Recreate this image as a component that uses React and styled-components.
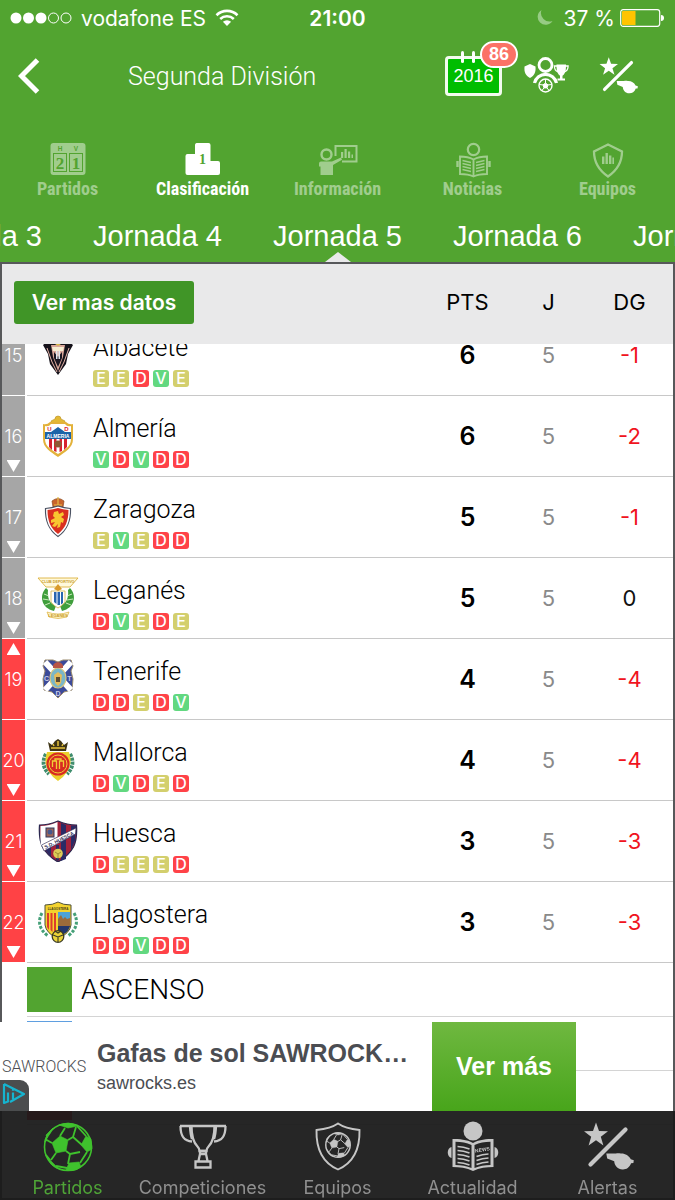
import { useLayoutEffect, useRef } from "react";
import styled, { createGlobalStyle } from "styled-components";

const teams = [
  { rank: 15, name: "Albacete", form: "EEDVE", pts: 6, played: 5, diff: -1, crest: "albacete" },
  { rank: 16, name: "Almería", form: "VDVDD", pts: 6, played: 5, diff: -2, move: "down", crest: "almeria" },
  { rank: 17, name: "Zaragoza", form: "EVEDD", pts: 5, played: 5, diff: -1, move: "down", crest: "zaragoza" },
  { rank: 18, name: "Leganés", form: "DVEDE", pts: 5, played: 5, diff: 0, move: "down", crest: "leganes" },
  { rank: 19, name: "Tenerife", form: "DDEDV", pts: 4, played: 5, diff: -4, move: "up", crest: "tenerife" },
  { rank: 20, name: "Mallorca", form: "DVDED", pts: 4, played: 5, diff: -4, move: "down", crest: "mallorca" },
  { rank: 21, name: "Huesca", form: "DEEED", pts: 3, played: 5, diff: -3, move: "down", crest: "huesca" },
  { rank: 22, name: "Llagostera", form: "DDVDD", pts: 3, played: 5, diff: -3, move: "down", crest: "llagostera" },
];

const FIRST_RELEGATED = 19;
const INITIAL_SCROLL = 29;

const formColors = { E: "#d3cf6d", D: "#ff4248", V: "#62d880" };

/* ---------- icons ---------- */

const SignalIcon = () => (
  <svg width="62" height="14" viewBox="0 0 62 14" fill="#fff">
    <circle cx="6" cy="7" r="5.5" />
    <circle cx="18.5" cy="7" r="5.5" />
    <circle cx="31" cy="7" r="5.5" />
    <circle cx="43.5" cy="7" r="5" fill="none" stroke="#fff" />
    <circle cx="56" cy="7" r="5" fill="none" stroke="#fff" />
  </svg>
);

const WifiIcon = () => (
  <svg width="24" height="18" viewBox="0 0 24 18" fill="none" stroke="#fff" strokeWidth="2.6">
    <path d="M1.5 6.2a15 15 0 0 1 21 0" />
    <path d="M5.2 10a9.8 9.8 0 0 1 13.6 0" />
    <path d="M12 17 7.9 12.8a6 6 0 0 1 8.2 0z" fill="#fff" stroke="none" />
  </svg>
);

const NightIcon = () => (
  <svg width="17" height="18" viewBox="0 0 17 18">
    <path d="M5.5 1A8 8 0 1 0 16.5 12 8.6 8.6 0 0 1 5.5 1z" fill="#97cb84" />
  </svg>
);

const BatteryIcon = () => (
  <svg width="45" height="18" viewBox="0 0 45 18">
    <rect x="0.7" y="0.7" width="39" height="16.6" rx="2.5" fill="none" stroke="#fff" strokeWidth="1.2" />
    <path d="M3 2h12.500v14H3a1 1 0 0 1-1-1V3a1 1 0 0 1 1-1z" fill="#ffc400" />
    <path d="M41 6a3 3 0 0 1 0 6z" fill="#fff" />
  </svg>
);

const BackIcon = () => (
  <svg width="22" height="36" viewBox="0 0 22 36" fill="none" stroke="#fff" strokeWidth="5">
    <path d="M19.500 2 3.500 18l16 16" />
  </svg>
);

const ballLines =
  "M17 14 22 6M25 18 30 15 39 23M30 15 33 5M23 29 27 32 37 30M27 32 25 42M34 4 43 14M44 30 37 41M9 21 2 17M13 31 8 38M24 46 13 44M5 12 2 20M7 38 3 33";
const ballPatches =
  "M17 14 25 18 23 29 13 31 9 21zM38 23 43 14 48 17 49 27 44 30zM16 3 25 6 35 4Q26-1 16 3zM26 41 36 40 38 45Q31 50 23 48zM7 38 14 45Q18 48 13 46 8 43 5 38zM3 13 10 6Q8 11 4 16z";

const Ball = ({ color, rim }) => (
  <g fill={color} stroke={color} strokeLinejoin="round">
    <circle cx="25" cy="25" r="23.500" fill="none" strokeWidth={rim} />
    <path d={ballLines} fill="none" strokeWidth="1.8" />
    <path d={ballPatches} strokeWidth="0.6" />
  </g>
);

const PlayerIcon = () => (
  <svg width="48" height="40" viewBox="0 0 48 40" fill="#fff">
    <path d="M0.500 10.500 6 8l5.500 2.500c.4 6-1 9-5.500 11.500C1.500 19.500 0 16.500.5 10.500z" />
    <circle cx="21.500" cy="9" r="6.500" fill="none" stroke="#fff" strokeWidth="2.8" />
    <path d="M10.500 27a11.300 11.300 0 0 1 22 0" fill="none" stroke="#fff" strokeWidth="3.200" />
    <circle cx="21.500" cy="29.500" r="6.500" fill="none" stroke="#fff" strokeWidth="1.400" />
    <path d="M21.500 27l2.500 1.900-1 3h-3l-1-3zM21.500 23v4M28 28.500l-4 .4M25.500 35l-2.500-3.100M17.500 35l2.500-3.100M15 28.500l4 .4" stroke="#fff" strokeWidth="1" />
    <path d="M32.500 8.500h9.500v2c0 5-1.500 8-3.500 9.200v2.800h2.500v2h-7.500v-2h2.500v-2.800c-2-1.200-3.500-4.200-3.500-9.200z" />
    <path d="M33 10h-2.600c0 3 1 5 3.600 5.800M41.500 10h2.600c0 3-1 5-3.600 5.800" fill="none" stroke="#fff" strokeWidth="1.300" />
  </svg>
);

const StarWhistleIcon = ({ size = 52, color = "#fff" }) => (
  <svg width={size} height={size} viewBox="0 0 52 52" fill={color}>
    <path d="M14 1.500l3 8.600 9 .2-7.200 5.500 2.600 8.700L14 19.300l-7.400 5.200 2.600-8.700L2 10.300l9-.2z" />
    <path d="M43.500 8.500 8.500 43.500" stroke={color} strokeWidth="4.200" strokeLinecap="round" />
    <path d="M24.300 32.500h9.500c2-.3 3-.2 5 0 4-.3 8.200 2 10 5.800l3 .9-.4 2.900-2.300.2c-1.700 4.500-5 6.400-8.600 6.200-4.700-.2-7.900-3.600-8.300-8.200l-7-2.800z" />
  </svg>
);

const MatchesIcon = () => (
  <svg width="36" height="34" viewBox="0 0 36 34">
    <rect x="0.500" y="1" width="35" height="32" rx="3" fill="#fff" />
    <g fill="#52a430" fontFamily="Liberation Sans, sans-serif" fontSize="6.500" fontWeight="700" textAnchor="middle">
      <text x="10" y="9">H</text>
      <text x="26" y="9">V</text>
    </g>
    <g fill="none" stroke="#52a430">
      <rect x="3.500" y="11.500" width="13" height="18" />
      <rect x="19.500" y="11.500" width="13" height="18" />
    </g>
    <g fill="#52a430" fontFamily="Liberation Serif, serif" fontSize="17" fontWeight="700" textAnchor="middle">
      <text x="10" y="26.500">2</text>
      <text x="26" y="26.500">1</text>
    </g>
  </svg>
);

const PodiumIcon = () => (
  <svg width="36" height="34" viewBox="0 0 36 34">
    <path d="M11.500 1h12a2 2 0 0 1 2 2v16H33a2 2 0 0 1 2 2v10a2 2 0 0 1-2 2H2.500a2 2 0 0 1-2-2V14a2 2 0 0 1 2-2H10V3a2 2 0 0 1 1.500-2z" fill="#fff" />
    <text x="17.500" y="22" fill="#52a430" fontFamily="Liberation Serif, serif" fontSize="14" fontWeight="700" textAnchor="middle">
      1
    </text>
  </svg>
);

const InfoIcon = () => (
  <svg width="40" height="34" viewBox="0 0 40 34" fill="#fff">
    <circle cx="8.500" cy="12.500" r="5" fill="none" stroke="#fff" strokeWidth="2.400" />
    <path d="M3 19.500h11l9-4 1 2.300-9 5.200V33H2.500v-8.500H1V21.500a2 2 0 0 1 2-2z" />
    <path d="M17.500 14V4h21v15.500H24" fill="none" stroke="#fff" strokeWidth="2" />
    <path d="M23 10h2.200v6H23zM26.500 7h2.200v9h-2.200zM30 9.500h2.200V16H30zM33.500 12.500h1.500V16h-1.500z" />
  </svg>
);

const ReaderOutlineIcon = () => (
  <svg width="36" height="36" viewBox="0 0 36 36" fill="none" stroke="#fff">
    <circle cx="18.500" cy="7.500" r="5.700" strokeWidth="2.200" />
    <path d="M5 14.500c5 0 9 .6 13.500 3 4.500-2.400 8.500-3 13.500-3V32c-5 0-9 .4-13.500 2.500C14 32.400 10 32 5 32zM18.500 17.500v17" strokeWidth="1.900" />
    <path d="M7.500 18.500l8.500 2M7.500 21.500l8.500 2M7.500 24.500l8.500 2M7.500 27.500l8.500 2M29.500 18.500l-8.500 2M29.500 21.500l-8.500 2M29.500 24.500l-8.500 2M29.500 27.500l-8.500 2" strokeWidth="1.400" />
    <path d="M2.500 19v6M34.500 19v6" strokeWidth="2.400" />
  </svg>
);

const ShieldChartIcon = () => (
  <svg width="36" height="36" viewBox="0 0 36 36" fill="#fff">
    <path d="M18 2.500 32 9.500C32 21 26 29 18 34.500 10 29 4 21 4 9.500z" fill="none" stroke="#fff" strokeWidth="2.300" />
    <path d="M12 14.500h2.400V22H12zM15.500 11h2.400v11h-2.400zM19 13.500h2.400V22H19zM22.400 15.500H24V22h-1.600z" />
  </svg>
);

const BallIcon = ({ color }) => (
  <svg width="52" height="52" viewBox="-1 -1 52 52">
    <Ball color={color} rim={1.6} />
  </svg>
);

const TrophyIcon = ({ color }) => (
  <svg width="52" height="52" viewBox="0 0 52 52" fill="none" stroke={color} strokeWidth="2.300">
    <path d="M3 5h46M14.500 5c0 12 2.500 17 6 20.500 1.500 1.500 2 2.800 2 4.500h7c0-1.700.5-3 2-4.500 3.500-3.500 6-8.500 6-20.500" />
    <path d="M3.500 5c0 9 2.500 15 11.500 15.500M48.500 5c0 9-2.500 15-11.500 15.500M13 5c.2 5 .6 9 2 13M39 5c-.2 5-.6 9-2 13" />
    <path d="M23 30h6v3h-6zM23 33l-1.500 7M29 33l1.500 7M18.500 40.500h15v6h-15z" />
  </svg>
);

const ShieldBallIcon = ({ color }) => (
  <svg width="52" height="52" viewBox="0 0 52 52">
    <path d="M26 2.500c5 3.500 12.500 5.500 21.500 6.500C48 28 42 41.500 26 48.500 10 41.500 4 28 4.500 9 13.500 8 21 6 26 2.500z" fill="none" stroke={color} strokeWidth="1.900" />
    <g transform="translate(13 11) scale(0.520)">
      <Ball color={color} rim={2.8} />
    </g>
  </svg>
);

const ReaderIcon = ({ color }) => (
  <svg width="52" height="52" viewBox="0 0 52 52" fill={color}>
    <circle cx="26" cy="10" r="9.500" />
    <path d="M5.500 18c7 0 14 .4 20.500 4 6.500-3.600 13.500-4 20.500-4v28c-7 0-14 .8-20.500 4-6.500-3.200-13.500-4-20.500-4z" />
    <path d="M4.500 26c-5 1-5 10 0 11zM47.500 26c5 1 5 10 0 11z" />
    <path d="M8.500 20.800c6 0 11 .8 16 3.200v23c-5-2-10-2.800-16-3zM43.500 20.800c-6 0-11 .8-16 3.200v23c5-2 10-2.800 16-3z" fill="#262626" />
    <path d="M10.500 25.500q6 .2 12 2.500M10.500 29.500q6 .2 12 2.500M10.500 33.500q6 .2 12 2.500M10.500 37.500q6 .2 12 2.500M10.500 41.500q6 .2 12 2.500M41.500 33q-6 .2-12 2.500M41.500 37q-6 .2-12 2.500M41.500 41q-6 .2-12 2.500" fill="none" stroke={color} strokeWidth="1.700" />
    <text x="35.500" y="30.500" fontFamily="Liberation Sans, sans-serif" fontSize="5" fontWeight="700" textAnchor="middle" transform="rotate(-10 35 29)">
      NEWS
    </text>
  </svg>
);

const AdChoicesIcon = () => (
  <svg width="24" height="24" viewBox="0 0 24 24" fill="none" stroke="#16b4cf" strokeWidth="2.200">
    <path d="M2 2 22 12 8 20M2 2v19l4-1.500v-9" strokeLinejoin="round" />
    <path d="M11 10.500v7M11 6.500v2.200" />
  </svg>
);

/* ---------- team crests ---------- */

const crests = {
  albacete: (
    <>
      <path d="M21 1 31 7l5 4-5 9-2 10-8 11-8-11-2-10-5-9 5-4z" fill="#15121a" />
      <path d="M14 11h14l-2 12-5 14-5-14z" fill="#d9a79a" />
      <path d="M15 13h12l-1 4H16z" fill="#f6edd2" />
      <path d="M17 18l4 5 4-5v6l-4 9-4-9z" fill="#1b1722" />
      <path d="M19 17h1.500v8H19zM21.500 17H23v8h-1.500z" fill="#dfe6ee" />
      <path d="M18 10l3-4 3 4-3 2z" fill="#d8b64a" />
      <path d="M10 14l5 14 5 10M32 14l-5 14-5 10" stroke="#e8b6ab" strokeWidth="1" fill="none" />
    </>
  ),
  almeria: (
    <>
      <path d="M18 4a3 3 0 0 1 6 0l4 2-1 4H15l-1-4z" fill="#e3b934" stroke="#b98f22" strokeWidth="0.6" />
      <path d="M6 9q4 1 7-2h16q3 3 7 2v15c0 9-8 13-15 18C14 37 6 33 6 24z" fill="#e3b23a" />
      <path d="M8 11q4 1 6-2h14q2 3 6 2v13c0 8-7 11-13 15C15 35 8 32 8 24z" fill="#fff" />
      <path d="M12 24h3v11l-3-3zM17 24h2.500v13L17 36zM22.500 24H25v12l-2.500 1zM27 24h3v8l-3 3z" fill="#d8232f" />
      <path d="M8 17h26v7H8zM14 17l7-5 7 5z" fill="#1c63a8" />
      <circle cx="21" cy="29" r="3.600" fill="#8d5b34" />
      <g fontFamily="Liberation Sans, sans-serif" fontWeight="700" textAnchor="middle">
        <text x="12.500" y="16" fontSize="6" fill="#d8232f">U</text>
        <text x="29.500" y="16" fontSize="6" fill="#d8232f">D</text>
        <text x="21" y="22.500" fontSize="5" fill="#fff">ALMERIA</text>
      </g>
    </>
  ),
  zaragoza: (
    <>
      <path d="M15 5q6-5 12 0l-1 6H16z" fill="#c9642c" stroke="#8e4a1f" strokeWidth="0.700" />
      <path d="M17 9h8M21 1v8" stroke="#e7bd4b" strokeWidth="1.200" />
      <path d="M8.500 12.500Q15 12 21 10q6 2 12.500 2.500C34 26 30 34 21 40.500 12 34 8 26 8.500 12.500z" fill="#fff" stroke="#4b5262" strokeWidth="1.200" />
      <path d="M10.500 14Q16 13.500 21 12q5 1.500 10.500 2C31.500 25 28.500 32 21 38 13.500 32 10.500 25 10.500 14z" fill="#d92f20" />
      <path d="M17 16l4-1 1 3 4-2 1 3-3 2 3 2-1 4-2-1-1 5-3 1 1-4-3 3-3-1 3-4-4 1v-3l4-2-2-2z" fill="#f8c630" />
    </>
  ),
  leganes: (
    <>
      <path d="M1 1h40l-8 9H9z" fill="#fff9dc" stroke="#dcb23e" strokeWidth="0.900" />
      <text x="21" y="5.500" fontFamily="Liberation Sans, sans-serif" fontSize="3.700" fontWeight="700" textAnchor="middle" fill="#c79a29">CLUB DEPORTIVO</text>
      <path d="M9 11C2 18 4 31 17 34l2-5c-6-2-9-8-8-16zM33 11c7 7 5 20-8 23l-2-5c6-2 9-8 8-16z" fill="#3f9e3c" />
      <path d="M7 17l5 2M6 22l6 1M8 28l5-2M35 17l-5 2M36 22l-6 1M34 28l-5-2" stroke="#d8f0c8" strokeWidth="0.900" />
      <path d="M14 14h14v11q-3 4-7 6-4-2-7-6z" fill="#fff" stroke="#d6b142" strokeWidth="0.800" />
      <path d="M17 15h2.500v12L17 25zM20.500 15H23v13h-2.500zM24 15h2v11l-2 1.500z" fill="#2b66b0" />
      <path d="M17 12l4-5 4 5-4 2z" fill="#d99a2b" />
      <path d="M10 35q11 4 22 0l-2 5q-9 3-18 0z" fill="#fff4c6" stroke="#dcb23e" strokeWidth="0.700" />
      <text x="21" y="40" fontFamily="Liberation Sans, sans-serif" fontSize="4" fontWeight="700" textAnchor="middle" fill="#c79a29">LEGANES</text>
    </>
  ),
  tenerife: (
    <>
      <path d="M8 2h8l5 2 5-2h8l2 6-2 5 2 8-1 11-8 2-6 6-6-6-8-2-1-11 2-8-2-5z" fill="#3b4a99" stroke="#9a8b6d" strokeWidth="1" />
      <path d="M8 4l26 28M34 4 8 32" stroke="#fff" strokeWidth="6" />
      <ellipse cx="21" cy="20" rx="8" ry="10" fill="#79b6c9" stroke="#ddc77c" strokeWidth="1.200" />
      <path d="M17 17l4-3 4 3-1 8-3 3-3-3z" fill="#e4bc5d" />
      <path d="M19 19h4v5h-4z" fill="#5b4b33" />
      <path d="M16 10q-1-5 5-6 6 1 5 6z" fill="#b85545" />
      <g fontFamily="Liberation Sans, sans-serif" fontSize="7" fontWeight="700" textAnchor="middle" fill="#c8cce8">
        <text x="9.500" y="23">C</text>
        <text x="32.500" y="23">T</text>
        <text x="21" y="38">D</text>
      </g>
    </>
  ),
  mallorca: (
    <>
      <path d="M11 3l4 3 3-4 3-2 3 2 3 4 4-3-2 9H13z" fill="#3d3415" />
      <path d="M14 9h14M16 5l1 2M26 5l-1 2M21 2v5" stroke="#e6c13b" strokeWidth="1.500" />
      <path d="M9 15q-6 11 3 20M33 15q6 11-3 20" stroke="#3f8d6d" strokeWidth="4" strokeDasharray="3 1" fill="none" />
      <path d="M10 13h22q4 12-2 20-4 6-9 9-5-3-9-9-6-8-2-20z" fill="#ecd02c" />
      <circle cx="21" cy="25" r="11.500" fill="#d82b22" />
      <circle cx="21" cy="25" r="9" fill="none" stroke="#f0cf36" strokeWidth="1" />
      <path d="M15.500 28v-6h4v8M26.500 28v-6h-4v8M18 22v-2h6v2" stroke="#f0cf36" strokeWidth="1.300" fill="none" />
    </>
  ),
  huesca: (
    <>
      <path d="M2.500 5Q12 5 21 1q9 4 18.500 4 1 14-3 22-5 9-15.500 15Q10.500 36 5.500 27q-4-8-3-22z" fill="#a3223b" stroke="#28264f" strokeWidth="1.200" />
      <path d="M24 3l5 2v34l-5 2zM34 5.500h5l-1 15-4 10zM9 26h5v11l-5-6zM19 25h3v15l-1 1-2-1z" fill="#2a2b66" />
      <path d="M3.500 6Q12 6 20.500 2v15L4 26Q3 17 3.500 6z" fill="#fff" />
      <rect x="9" y="8" width="8" height="9" fill="#9c6658" stroke="#30395f" />
      <circle cx="13" cy="12" r="2.500" fill="#46588e" />
      <path d="M4.500 25 39 8l-.5 6L7 31z" fill="#fff" stroke="#28264f" strokeWidth="0.600" />
      <text x="22" y="22" fontFamily="Liberation Sans, sans-serif" fontSize="5" fontWeight="700" textAnchor="middle" fill="#28264f" transform="rotate(-27 22 20)">S.D. HUESCA</text>
      <circle cx="21" cy="33.500" r="4.800" fill="#dccb57" />
      <path d="M18 32l3 2 3-2M21 34v4" stroke="#8a7a2b" strokeWidth="0.800" fill="none" />
    </>
  ),
  llagostera: (
    <>
      <path d="M5 12q-7 13 6 23M37 12q7 13-6 23" stroke="#45a078" strokeWidth="3" strokeDasharray="3 1.500" fill="none" />
      <path d="M8 4q8 0 13-3 5 3 13 3v20q-1 8-13 14Q9 32 8 24z" fill="#f3d32e" stroke="#4e5138" strokeWidth="1" />
      <text x="21" y="9" fontFamily="Liberation Sans, sans-serif" fontSize="3" fontWeight="700" textAnchor="middle" fill="#443e1d">LLAGOSTERA</text>
      <path d="M10 12h2v17l-2-3zM13.500 12h2v19l-2-2zM17 12h2v21l-2-1z" fill="#dd3a2c" />
      <path d="M21 11h12v14H21z" fill="#4ea3d6" />
      <path d="M21 18l3-4 2 4 2-2 2 2 3-1v9H21z" fill="#9b6b3a" />
      <path d="M21 25h12q-1 5-6 8l-6 3z" fill="#23376b" />
      <circle cx="21" cy="35.500" r="5.800" fill="#ecd438" stroke="#3b3b25" strokeWidth="1.300" />
      <path d="M16 34l5 2 5-2M21 36v5M18 30l3 2 3-2" stroke="#3b3b25" strokeWidth="1.100" fill="none" />
    </>
  ),
};

const Crest = ({ team }) => (
  <svg width="42" height="42" viewBox="0 0 42 42" aria-hidden="true">
    {crests[team]}
  </svg>
);

/* ---------- data for the bars ---------- */

const sections = [
  { label: "Partidos", icon: <MatchesIcon /> },
  { label: "Clasificación", icon: <PodiumIcon />, active: true },
  { label: "Información", icon: <InfoIcon /> },
  { label: "Noticias", icon: <ReaderOutlineIcon /> },
  { label: "Equipos", icon: <ShieldChartIcon /> },
];

const rounds = [3, 4, 5, 6, 7];

const tabs = [
  { label: "Partidos", Icon: BallIcon, active: true },
  { label: "Competiciones", Icon: TrophyIcon },
  { label: "Equipos", Icon: ShieldBallIcon },
  { label: "Actualidad", Icon: ReaderIcon },
  { label: "Alertas", Icon: StarWhistleIcon },
];

const legend = [
  { color: "#52a430", label: "ASCENSO" },
  { color: "#5f9fe0" },
  { color: "#ff2030" },
];

const TeamRow = ({ team }) => (
  <Row>
    <Rank $relegated={team.rank >= FIRST_RELEGATED}>
      {team.move === "up" ? <Arrow $up /> : <span />}
      {team.rank}
      {team.move === "down" && <Arrow />}
    </Rank>
    <TeamCell>
      <Crest team={team.crest} />
      <TeamText>
        <TeamName>{team.name}</TeamName>
        <Form>
          {team.form.split("").map((result, i) => (
            <Result key={i} $result={result}>
              {result}
            </Result>
          ))}
        </Form>
      </TeamText>
    </TeamCell>
    <Points>{team.pts}</Points>
    <Played>{team.played}</Played>
    <Diff $negative={team.diff < 0}>{team.diff}</Diff>
  </Row>
);

const App = () => {
  const listRef = useRef(null);

  useLayoutEffect(() => {
    listRef.current.scrollTop = INITIAL_SCROLL;
  }, []);

  return (
    <Screen>
      <GlobalStyle />

      <Header>
        <StatusBar>
          <StatusGroup>
            <SignalIcon />
            <span>vodafone ES</span>
            <WifiIcon />
          </StatusGroup>
          <Clock>21:00</Clock>
          <StatusGroup $end>
            <NightIcon />
            <span>37 %</span>
            <BatteryIcon />
          </StatusGroup>
        </StatusBar>

        <NavBar>
          <BackButton aria-label="Atrás">
            <BackIcon />
          </BackButton>
          <Title>Segunda División</Title>
          <Actions>
            <SeasonButton>
              2016
              <Badge>86</Badge>
            </SeasonButton>
            <IconButton aria-label="Jugadores">
              <PlayerIcon />
            </IconButton>
            <IconButton aria-label="Alertas">
              <StarWhistleIcon size={40} />
            </IconButton>
          </Actions>
        </NavBar>

        <Sections>
          {sections.map(({ label, icon, active }) => (
            <Section key={label} $active={active}>
              {icon}
              {label}
            </Section>
          ))}
        </Sections>

        <Rounds>
          {rounds.map((round) => (
            <Round key={round} $active={round === 5}>
              Jornada {round}
            </Round>
          ))}
        </Rounds>
      </Header>

      <List ref={listRef}>
        <Table>
          <Head>
            <HeadRow>
              <ActionHead>
                <MoreButton>Ver mas datos</MoreButton>
              </ActionHead>
              <HeadCell>PTS</HeadCell>
              <HeadCell>J</HeadCell>
              <HeadCell>DG</HeadCell>
            </HeadRow>
          </Head>
          <Body>
            {teams.map((team) => (
              <TeamRow key={team.rank} team={team} />
            ))}
          </Body>
        </Table>
        {legend.map(({ color, label }) => (
          <LegendRow key={color}>
            <Swatch $color={color} />
            {label}
          </LegendRow>
        ))}
      </List>

      <Dock>
        <Ad>
          <AdLogo>SAWROCKS</AdLogo>
          <AdText>
            <AdTitle>Gafas de sol SAWROCK…</AdTitle>
            <AdLink href="#">sawrocks.es</AdLink>
          </AdText>
          <AdButton>Ver más</AdButton>
          <AdChoices aria-label="AdChoices">
            <AdChoicesIcon />
          </AdChoices>
        </Ad>
        <TabBar>
          {tabs.map(({ label, Icon, active }) => (
            <Tab key={label} $active={active}>
              <Icon color={active ? "#3fc22d" : "#c6c6c6"} />
              {label}
            </Tab>
          ))}
        </TabBar>
      </Dock>
    </Screen>
  );
};

const GlobalStyle = createGlobalStyle`
  * {
    box-sizing: border-box;
  }

  body {
    margin: 0;
    font-family: Inter, sans-serif;
  }

  button {
    border: 0;
    padding: 0;
    background: none;
    color: inherit;
    font: inherit;
    cursor: pointer;
  }

  svg {
    display: block;
    flex: none;
  }
`;

const Screen = styled.div`
  position: relative;
  display: flex;
  flex-direction: column;
  height: 100vh;
  overflow: hidden;
`;

const Header = styled.header`
  background: #52a430;
  color: #fff;
`;

const StatusBar = styled.div`
  display: grid;
  grid-template-columns: 1fr auto 1fr;
  align-items: center;
  height: 36px;
  padding: 0 10px;
  font-size: 21px;
`;

const StatusGroup = styled.div`
  display: flex;
  align-items: center;
  justify-content: ${({ $end }) => ($end ? "flex-end" : "flex-start")};
  gap: ${({ $end }) => ($end ? "5px" : "9px")};
  white-space: nowrap;

  svg:first-child {
    margin-right: ${({ $end }) => ($end ? "6px" : "0")};
  }
`;

const Clock = styled.div`
  font-weight: 600;
`;

const NavBar = styled.nav`
  display: flex;
  align-items: center;
  height: 80px;
  padding: 0 33px 0 18px;
`;

const BackButton = styled.button`
  width: 110px;
`;

const Title = styled.h1`
  flex: 1;
  margin: 0;
  font-family: Roboto, "Liberation Sans", sans-serif;
  font-size: 25px;
  font-weight: 300;
`;

const Actions = styled.div`
  display: flex;
  align-items: center;
  gap: 22px;
`;

const SeasonButton = styled.button`
  position: relative;
  width: 57px;
  height: 40px;
  border: 3px solid #f2fbee;
  border-radius: 4px;
  background: #00bd00;
  font-family: "Liberation Sans", sans-serif;
  font-size: 18px;

  &:before,
  &:after {
    content: "";
    position: absolute;
    top: -8px;
    left: 13px;
    width: 3px;
    height: 12px;
    border-radius: 2px;
    background: #fff;
  }

  &:after {
    left: 24px;
  }
`;

const Badge = styled.span`
  position: absolute;
  z-index: 1;
  top: -18px;
  right: -19px;
  width: 38px;
  height: 27px;
  border: 2px solid #fff;
  border-radius: 14px;
  background: #fb7266;
  font-size: 18px;
  font-weight: 700;
  line-height: 23px;
`;

const IconButton = styled.button`
  display: flex;
  justify-content: center;
  width: 48px;
`;

const Sections = styled.div`
  display: grid;
  grid-template-columns: repeat(5, 1fr);
  height: 94px;
  padding-top: 26px;
`;

const Section = styled.button`
  display: flex;
  flex-direction: column;
  align-items: center;
  justify-content: space-between;
  height: 58px;
  font-family: "Liberation Sans Narrow", "Roboto Condensed", sans-serif;
  font-size: 18px;
  font-weight: 700;
  line-height: 22px;
  opacity: ${({ $active }) => ($active ? 1 : 0.45)};
`;

const Rounds = styled.div`
  display: flex;
  justify-content: center;
  height: 52px;
  overflow: hidden;
`;

const Round = styled.button`
  position: relative;
  flex: none;
  width: 180px;
  font-family: "Liberation Sans", sans-serif;
  font-size: 29px;

  &:after {
    content: "";
    position: absolute;
    bottom: 0;
    left: 50%;
    display: ${({ $active }) => ($active ? "block" : "none")};
    margin-left: -13px;
    border: 13px solid transparent;
    border-top: 0;
    border-bottom: 10px solid #e9e9ea;
  }
`;

const List = styled.main`
  flex: 1;
  overflow-y: auto;
  scrollbar-width: none;
  padding-bottom: 178px;
  border: 2px solid #57585a;
  background: #fff;
`;

const Table = styled.table`
  display: block;
`;

const Head = styled.thead`
  position: sticky;
  z-index: 1;
  top: 0;
  display: block;
  background: #e9e9ea;
`;

const Body = styled.tbody`
  display: block;
`;

const Row = styled.tr`
  display: grid;
  grid-template-columns: 23px minmax(0, 1fr) 81px 81px 84px;
  height: 81px;
`;

const HeadRow = styled(Row)`
  grid-template-columns: minmax(0, 1fr) 81px 81px 84px;
  height: 80px;
  padding-bottom: 4px;
`;

const HeadCell = styled.th`
  display: flex;
  align-items: center;
  justify-content: center;
  padding: 0;
  font-size: 22px;
  font-weight: 400;

  &:last-child {
    padding-right: 3px;
  }
`;

const ActionHead = styled(HeadCell)`
  justify-content: flex-start;
  padding-left: 12px;
`;

const MoreButton = styled.button`
  width: 180px;
  height: 43px;
  border-radius: 3px;
  background: #409527;
  color: #fff;
  font-size: 21px;
  font-weight: 600;
`;

const Rank = styled.td`
  display: grid;
  grid-template-rows: 1fr auto 1fr;
  justify-items: center;
  padding: 4px 0;
  border-bottom: 1px solid #fff;
  background: ${({ $relegated }) => ($relegated ? "#ff4245" : "#a6a6a6")};
  color: #fff;
  font-size: 18px;
  font-weight: 300;
`;

const Arrow = styled.span`
  align-self: ${({ $up }) => ($up ? "start" : "end")};
  width: 14px;
  height: 12px;
  background: #fff;
  clip-path: ${({ $up }) =>
    $up ? "polygon(50% 0, 100% 100%, 0 100%)" : "polygon(0 0, 100% 0, 50% 100%)"};
`;

const TeamCell = styled.td`
  display: flex;
  align-items: center;
  gap: 14px;
  margin-left: 2px;
  padding: 0 0 0 10px;
  border-bottom: 1px solid #c8c8c8;
`;

const TeamText = styled.div`
  padding-top: 10px;
`;

const TeamName = styled.div`
  color: #000;
  font-family: Roboto, "Liberation Sans", sans-serif;
  font-size: 25px;
  font-weight: 300;
  line-height: 28px;
`;

const Form = styled.div`
  display: flex;
  gap: 4px;
  margin-top: 8px;
`;

const Result = styled.span`
  width: 16px;
  height: 17px;
  border-radius: 3px;
  background: ${({ $result }) => formColors[$result]};
  color: #fff;
  font-size: 16px;
  font-weight: 500;
  line-height: 17px;
  text-align: center;
`;

const Cell = styled.td`
  display: flex;
  align-items: center;
  justify-content: center;
  padding: 0;
  border-bottom: 1px solid #c8c8c8;
  font-size: 22px;
`;

const Points = styled(Cell)`
  font-size: 25px;
  font-weight: 600;
`;

const Played = styled(Cell)`
  color: #8a8a8a;
`;

const Diff = styled(Cell)`
  padding-right: 3px;
  color: ${({ $negative }) => ($negative ? "#f0141e" : "#111")};
`;

const LegendRow = styled.div`
  display: flex;
  align-items: center;
  gap: 9px;
  height: 54px;
  margin-left: 25px;
  border-bottom: 1px solid #d4d4d4;
  font-family: Roboto, "Liberation Sans", sans-serif;
  font-size: 28px;
  font-weight: 300;
`;

const Swatch = styled.span`
  width: 45px;
  height: 45px;
  background: ${({ $color }) => $color};
`;

const Dock = styled.div`
  position: absolute;
  right: 0;
  bottom: 0;
  left: 0;
`;

const Ad = styled.aside`
  position: relative;
  display: flex;
  align-items: center;
  width: 576px;
  max-width: 100%;
  height: 89px;
  background: #fff;
  color: #4b4d52;
  font-family: "Liberation Sans", sans-serif;
`;

const AdLogo = styled.div`
  width: 97px;
  padding-left: 2px;
  font-family: Roboto, "Liberation Sans", sans-serif;
  font-size: 16px;
  font-weight: 300;
`;

const AdText = styled.div`
  flex: 1;
  min-width: 0;
`;

const AdTitle = styled.div`
  font-size: 25px;
  font-weight: 700;
  line-height: 32px;
  white-space: nowrap;
`;

const AdLink = styled.a`
  display: block;
  color: inherit;
  font-size: 18px;
  line-height: 28px;
  text-decoration: none;
`;

const AdButton = styled.button`
  align-self: stretch;
  width: 144px;
  background: linear-gradient(#6fb840, #48a51b);
  color: #fff;
  font-size: 25px;
  font-weight: 700;
`;

const AdChoices = styled.button`
  position: absolute;
  bottom: 0;
  left: 0;
  width: 29px;
  height: 31px;
  padding: 0 0 4px 2px;
  border-radius: 0 9px 0 0;
  background: #4b4d4e;
`;

const TabBar = styled.nav`
  display: grid;
  grid-template-columns: repeat(5, 1fr);
  height: 89px;
  background: rgba(26, 26, 26, 0.95);
`;

const Tab = styled.button`
  display: flex;
  flex-direction: column;
  align-items: center;
  padding-top: 10px;
  color: ${({ $active }) => ($active ? "#4fa437" : "#909090")};
  font-size: 18px;
  line-height: 30px;
`;

export default App;
